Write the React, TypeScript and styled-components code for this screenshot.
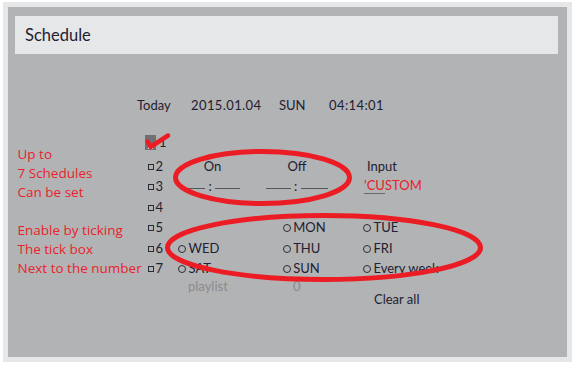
import * as React from 'react';
import styled, { createGlobalStyle, css } from 'styled-components';

const RED = '#ec1c24';
const INK = '#1f2030';

const GlobalStyle = createGlobalStyle`
  html, body {
    margin: 0;
    padding: 0;
    background: #ffffff;
  }
  body {
    font-family: Lato, "Liberation Sans", sans-serif;
  }
`;

const Root = styled.div`
  position: relative;
  width: 581px;
  height: 373px;
  padding: 2px 0 0 3px;
  box-sizing: border-box;
`;

const Frame = styled.div`
  width: 569px;
  height: 360px;
  padding: 5px;
  box-sizing: border-box;
  background: #e6e7e8;
`;

const Panel = styled.div`
  height: 100%;
  display: flex;
  flex-direction: column;
  padding: 9px 9px 0 7px;
  box-sizing: border-box;
  background: #b2b3b5;
  color: ${INK};
`;

const Header = styled.div`
  height: 38px;
  display: flex;
  align-items: center;
  padding-left: 10px;
  background: #e6e7e8;
  font-size: 16.5px;
`;

const DateRow = styled.div`
  margin-top: 41px;
  display: flex;
  padding-left: 122px;
  font-size: 13px;
  line-height: 20px;
`;

const DateCell = styled.span<{ $w?: number; $spaced?: boolean }>`
  width: ${p => (p.$w ? `${p.$w}px` : 'auto')};
  letter-spacing: ${p => (p.$spaced ? '0.4px' : '0')};
`;

const Main = styled.div`
  margin-top: 20px;
  display: flex;
  align-items: flex-start;
`;

const Notes = styled.div`
  width: 130px;
  padding: 9.5px 0 0 2.5px;
  box-sizing: border-box;
  font-family: "Open Sans", "Liberation Sans", sans-serif;
  font-size: 13.5px;
  line-height: 19px;
  color: #e8232b;
  white-space: nowrap;
`;

const NoteGroup = styled.div<{ $spaced?: boolean }>`
  margin-top: ${p => (p.$spaced ? '19px' : '0')};
`;

const Grid = styled.div`
  display: grid;
  grid-template-columns: 30px 105px 81px 1fr;
  grid-template-rows: repeat(7, 20.5px) auto;
  font-size: 13px;
`;

const placed = css<{ $col: string | number; $row: string | number }>`
  grid-column: ${p => p.$col};
  grid-row: ${p => p.$row};
`;

const Tick = styled.div<{ $col: number; $row: number; $active?: boolean }>`
  ${placed};
  display: flex;
  align-items: ${p => (p.$active ? 'flex-start' : 'center')};
  gap: ${p => (p.$active ? '3px' : '1.5px')};
  padding-left: ${p => (p.$active ? '0' : '3px')};
`;

const TickBox = styled.span`
  width: 6px;
  height: 6px;
  margin-top: 2px;
  border: 1px solid #2a2a33;
  box-sizing: border-box;
`;

const ActiveBox = styled.span`
  width: 11px;
  height: 15px;
  display: flex;
  align-items: flex-end;
  justify-content: center;
  padding-bottom: 1px;
  box-sizing: border-box;
  background: #6f7072;
`;

const ActiveInner = styled.span`
  width: 5px;
  height: 5px;
  background: #ffffff;
`;

const TickNumber = styled.span<{ $active?: boolean }>`
  line-height: ${p => (p.$active ? '15px' : 'normal')};
`;

const Radio = styled.div<{ $col: number; $row: number; $indent: number }>`
  ${placed};
  display: flex;
  align-items: center;
  gap: 2.5px;
  padding-left: ${p => p.$indent}px;
  white-space: nowrap;
`;

const RadioDot = styled.span`
  width: 8px;
  height: 8px;
  margin-top: 2px;
  flex: none;
  border: 1px solid #2d2d35;
  border-radius: 50%;
  box-sizing: border-box;
`;

const OnOff = styled.div`
  grid-column: 2 / 4;
  grid-row: 2 / 4;
  display: grid;
  grid-template-columns: 75px 75px;
  grid-template-rows: 20.5px 20.5px;
  column-gap: 9.5px;
  justify-items: center;
  align-items: center;
`;

const Time = styled.div`
  display: flex;
  align-items: center;
`;

const Blank = styled.span<{ $w: number }>`
  width: ${p => p.$w}px;
  height: 1px;
  margin-top: 5px;
  background: #55565a;
`;

const Colon = styled.span<{ $after?: number }>`
  margin: 0 ${p => p.$after ?? 3}px 0 3px;
`;

const Field = styled.div<{ $col: number; $row: number; $indent: number }>`
  ${placed};
  display: flex;
  align-items: center;
  padding-left: ${p => p.$indent}px;
`;

const Custom = styled.span`
  color: #e8202a;
  line-height: 13px;
`;

const CustomMark = styled.span`
  display: inline-block;
  padding-bottom: 1px;
  border-bottom: 1px solid #6a6a6e;
`;

const Muted = styled.div<{ $col: number; $row: number }>`
  ${placed};
  padding-left: 13px;
  line-height: 15px;
  color: #8a8b8e;
`;

const ClearAll = styled.div<{ $col: number; $row: number }>`
  ${placed};
  padding: 13px 0 0 13px;
  line-height: 15px;
`;

const Overlay = styled.svg`
  position: absolute;
  top: 0;
  left: 0;
  pointer-events: none;
`;

const days = [
  { label: 'MON', col: 3, row: 5 },
  { label: 'TUE', col: 4, row: 5 },
  { label: 'WED', col: 2, row: 6 },
  { label: 'THU', col: 3, row: 6 },
  { label: 'FRI', col: 4, row: 6 },
  { label: 'SAT', col: 2, row: 7 },
  { label: 'SUN', col: 3, row: 7 },
  { label: 'Every week', col: 4, row: 7 },
];

const indentFor = (col: number) => (col === 2 ? 3 : col === 3 ? 2.7 : 2);

const App: React.FC = () => {
  return (
    <Root>
      <GlobalStyle />
      <Frame>
        <Panel>
          <Header>Schedule</Header>
          <DateRow>
            <DateCell $w={54}>Today</DateCell>
            <DateCell $w={88} $spaced>2015.01.04</DateCell>
            <DateCell $w={50}>SUN</DateCell>
            <DateCell $spaced>04:14:01</DateCell>
          </DateRow>
          <Main>
            <Notes>
              <NoteGroup>
                <div>Up to</div>
                <div>7 Schedules</div>
                <div>Can be set</div>
              </NoteGroup>
              <NoteGroup $spaced>
                <div>Enable by ticking</div>
                <div>The tick box</div>
                <div>Next to the number</div>
              </NoteGroup>
            </Notes>
            <Grid>
              <Tick $col={1} $row={1} $active>
                <ActiveBox>
                  <ActiveInner />
                </ActiveBox>
                <TickNumber $active>1</TickNumber>
              </Tick>
              {[2, 3, 4, 5, 6, 7].map(n => (
                <Tick key={n} $col={1} $row={n}>
                  <TickBox />
                  <TickNumber>{n}</TickNumber>
                </Tick>
              ))}

              <OnOff>
                <span>On</span>
                <span>Off</span>
                <Time>
                  <Blank $w={20} />
                  <Colon>:</Colon>
                  <Blank $w={25} />
                </Time>
                <Time>
                  <Blank $w={25} />
                  <Colon $after={4}>:</Colon>
                  <Blank $w={27} />
                </Time>
              </OnOff>

              <Field $col={4} $row={2} $indent={6}>Input</Field>
              <Field $col={4} $row={3} $indent={3}>
                <Custom>
                  <CustomMark>'CU</CustomMark>STOM
                </Custom>
              </Field>

              {days.map(d => (
                <Radio key={d.label} $col={d.col} $row={d.row} $indent={indentFor(d.col)}>
                  <RadioDot />
                  {d.label}
                </Radio>
              ))}

              <Muted $col={2} $row={8}>playlist</Muted>
              <Muted $col={3} $row={8}>0</Muted>
              <ClearAll $col={4} $row={8}>Clear all</ClearAll>
            </Grid>
          </Main>
        </Panel>
      </Frame>

      {/* hand-drawn annotation marks over the screenshot */}
      <Overlay width={581} height={373} viewBox="0 0 581 373">
        <path
          d="M147.5 141.5 L150.5 147 L168 135.5"
          fill="none"
          stroke={RED}
          strokeWidth={4.5}
          strokeLinecap="round"
          strokeLinejoin="round"
        />
        <ellipse cx={262.5} cy={177.5} rx={87} ry={26} fill="none" stroke={RED} strokeWidth={5} />
        <ellipse cx={324} cy={247.5} rx={156.5} ry={32} fill="none" stroke={RED} strokeWidth={5} />
      </Overlay>
    </Root>
  );
};

export default App;
